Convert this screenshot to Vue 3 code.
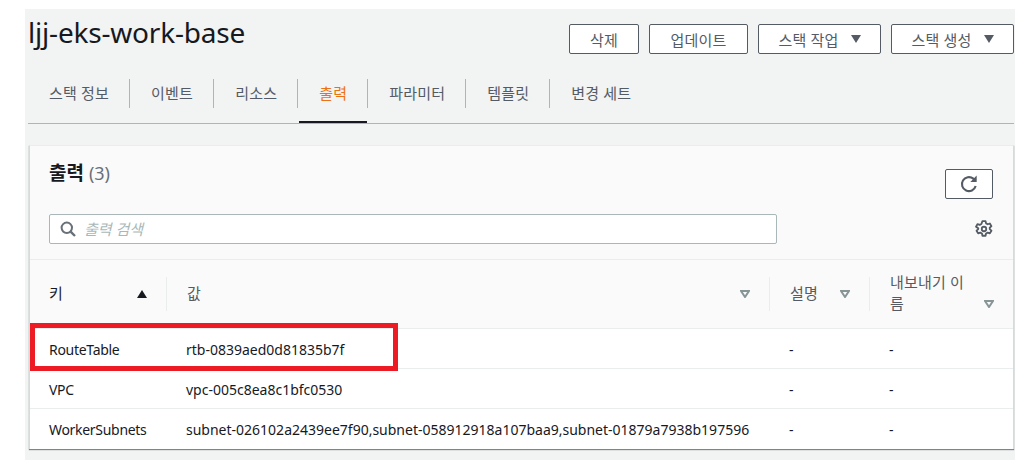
<script setup>
const tabs = ['스택 정보', '이벤트', '리소스', '출력', '파라미터', '템플릿', '변경 세트']

const outputs = [
  { key: 'RouteTable', value: 'rtb-0839aed0d81835b7f', desc: '-', exportName: '-' },
  { key: 'VPC', value: 'vpc-005c8ea8c1bfc0530', desc: '-', exportName: '-' },
  {
    key: 'WorkerSubnets',
    value: 'subnet-026102a2439ee7f90,subnet-058912918a107baa9,subnet-01879a7938b197596',
    desc: '-',
    exportName: '-',
  },
]
</script>

<template>
  <div class="page">
    <div class="top">
      <h1>ljj-eks-work-base</h1>
      <div class="actions">
        <button class="btn w-del">삭제</button>
        <button class="btn w-upd">업데이트</button>
        <button class="btn w-menu">스택 작업<span class="caret"></span></button>
        <button class="btn w-menu">스택 생성<span class="caret"></span></button>
      </div>
    </div>

    <!-- Tabs -->
    <div class="tabs">
      <div v-for="tab in tabs" :key="tab" class="tab" :class="{ active: tab === '출력' }">
        <span class="tab-label">{{ tab }}</span>
      </div>
    </div>

    <!-- Outputs card -->
    <div class="card">
      <div class="card-head">
        <div class="head-row">
          <h2>출력 <span class="count">(3)</span></h2>
          <button class="refresh">
            <svg width="20" height="20" viewBox="0 0 18 18" fill="none">
              <path d="M15 10.800A6.300 6.300 0 1 1 12.900 4.200L15 6" stroke="#545b64" stroke-width="1.900" />
              <path d="M15.900 1.300V7.200H10.200Z" fill="#545b64" />
            </svg>
          </button>
        </div>
        <div class="search-row">
          <div class="search">
            <svg width="16" height="16" viewBox="0 0 16 16" fill="none">
              <circle cx="6.800" cy="6.800" r="5.200" stroke="#687078" stroke-width="2" />
              <path d="M10.600 10.600L15 15" stroke="#687078" stroke-width="2.400" />
            </svg>
            <span class="placeholder">출력 검색</span>
          </div>
          <svg class="gear" width="18" height="18" viewBox="0 0 16 16" fill="none">
            <path
              d="M6.600 1h2.800l.4 2 1.500.8 1.900-.7 1.400 2.400-1.500 1.400v1.200l1.500 1.400-1.400 2.400-1.900-.7-1.500.8-.4 2H6.600l-.4-2-1.500-.8-1.900.7-1.400-2.400 1.500-1.400V7.400L.9 6 2.300 3.600l1.900.7 1.500-.8Z"
              stroke="#545b64"
              stroke-width="1.600"
              stroke-linejoin="round"
            />
            <circle cx="8" cy="8" r="2" stroke="#545b64" stroke-width="1.600" />
          </svg>
        </div>
      </div>

      <table>
        <colgroup>
          <col class="c-key" />
          <col class="c-value" />
          <col class="c-desc" />
          <col class="c-export" />
        </colgroup>
        <thead>
          <tr>
            <th>
              <div class="th-in strong">
                <span class="th-text">키</span>
                <svg width="10" height="8" viewBox="0 0 10 8"><path d="M5 0l5 8H0Z" fill="#16191f" /></svg>
              </div>
            </th>
            <th>
              <div class="th-in sep">
                <span class="th-text">값</span>
                <svg width="10" height="8" viewBox="0 0 10 8"><path d="M1 1h8L5 7Z" fill="none" stroke="#879596" stroke-width="2" /></svg>
              </div>
            </th>
            <th>
              <div class="th-in sep">
                <span class="th-text">설명</span>
                <svg width="10" height="8" viewBox="0 0 10 8"><path d="M1 1h8L5 7Z" fill="none" stroke="#879596" stroke-width="2" /></svg>
              </div>
            </th>
            <th>
              <div class="th-in sep wrap">
                <span class="th-long">내보내기 이름</span>
                <svg class="sort-low" width="10" height="8" viewBox="0 0 10 8"><path d="M1 1h8L5 7Z" fill="none" stroke="#879596" stroke-width="2" /></svg>
              </div>
            </th>
          </tr>
        </thead>
        <tbody>
          <tr v-for="row in outputs" :key="row.key">
            <td class="key">{{ row.key }}</td>
            <td class="val">{{ row.value }}</td>
            <td class="val">{{ row.desc }}</td>
            <td class="val">{{ row.exportName }}</td>
          </tr>
        </tbody>
      </table>
    </div>

    <!-- Red annotation over the first row -->
    <div class="marker"></div>
  </div>
</template>

<style scoped>
.page {
  position: relative;
  box-sizing: border-box;
  width: 990px;
  height: 451px;
  margin: 9px 0 0 25px;
  padding: 0 1px 0 3px;
  background: #f2f3f3;
  font-family: "Noto Sans", "Noto Sans CJK KR", sans-serif;
  font-size: 14px;
  color: #16191f;
}

/* Header */
.top {
  display: flex;
  justify-content: space-between;
  height: 70px;
}

h1 {
  margin: 3px 0 0;
  font-size: 28px;
  line-height: 40px;
  font-weight: 400;
  letter-spacing: -0.2px;
}

.actions {
  display: flex;
  gap: 10px;
  padding-top: 15px;
}

.btn {
  display: flex;
  align-items: center;
  justify-content: center;
  gap: 12px;
  box-sizing: border-box;
  height: 30px;
  padding: 0;
  border: 1px solid #545b64;
  border-radius: 2px;
  background: #fff;
  color: #545b64;
  font: 400 15px "Noto Sans", "Noto Sans CJK KR", sans-serif;
  letter-spacing: 0.2px;
}

.w-del {
  width: 70px;
}

.w-upd {
  width: 99px;
}

.w-menu {
  width: 123px;
}

.caret {
  border-left: 5px solid transparent;
  border-right: 5px solid transparent;
  border-top: 8px solid #545b64;
}

/* Tabs */
.tabs {
  display: flex;
  box-sizing: border-box;
  height: 45px;
  border-bottom: 1px solid #aab7b8;
}

.tab {
  color: #545b64;
  font-size: 15px;
  letter-spacing: 0.2px;
}

.tab-label {
  display: block;
  height: 29px;
  padding: 0 20px 0 21px;
  line-height: 29px;
  border-right: 1px solid #aab7b8;
}

.tab:last-child .tab-label {
  border-right: none;
}

.tab.active {
  color: #ec7211;
}

.tab.active::after {
  content: '';
  display: block;
  height: 2px;
  margin: 13px 1px 0;
  background: #16191f;
}

/* Card */
.card {
  box-sizing: border-box;
  width: 985px;
  margin: 21px 0 0 1px;
  background: #fff;
  border-top: 1px solid #eaeded;
  border-left: 1px solid #d5dbdb;
  border-right: 1px solid #d5dbdb;
  box-shadow: 0 1px 1px rgba(0, 28, 36, 0.5);
}

.card-head {
  box-sizing: border-box;
  height: 114px;
  padding: 0 20px 0 19px;
  background: #fafafa;
  border-bottom: 1px solid #eaeded;
}

.head-row {
  display: flex;
  justify-content: space-between;
  box-sizing: border-box;
  height: 68px;
  padding-top: 23px;
}

h2 {
  margin: -14px 0 0;
  font-size: 19px;
  line-height: 36px;
  font-weight: 700;
}

.count {
  color: #687078;
  font-size: 18px;
  font-weight: 400;
}

.refresh {
  display: flex;
  align-items: center;
  justify-content: center;
  box-sizing: border-box;
  width: 48px;
  height: 30px;
  padding: 0;
  border: 1px solid #545b64;
  border-radius: 2px;
  background: #fff;
}

.search-row {
  display: flex;
  align-items: center;
  justify-content: space-between;
}

.search {
  display: flex;
  align-items: center;
  gap: 8px;
  box-sizing: border-box;
  width: 728px;
  height: 30px;
  padding-left: 10px;
  border: 1px solid #aab7b8;
  border-radius: 2px;
  background: #fff;
}

.placeholder {
  margin-bottom: 2px;
  color: #aab7b8;
  font-style: italic;
  font-size: 15px;
}

/* Table */
table {
  width: 100%;
  table-layout: fixed;
  border-collapse: collapse;
}

.c-key {
  width: 136px;
}

.c-value {
  width: 603px;
}

.c-desc {
  width: 100px;
}

th {
  height: 68px;
  padding: 0;
  background: #fafafa;
  border-bottom: 1px solid #eaeded;
  text-align: left;
  font-size: 15px;
  font-weight: 400;
  letter-spacing: 0.2px;
  color: #545b64;
}

.th-in {
  display: flex;
  align-items: center;
  justify-content: space-between;
  box-sizing: border-box;
  height: 34px;
  padding: 0 19px 0 20px;
}

.th-in.strong {
  padding-left: 19px;
  color: #16191f;
}

.th-text {
  margin-bottom: 3px;
}

.th-in.sep {
  border-left: 1px solid #eaeded;
}

.th-in.wrap {
  position: relative;
}

.th-long {
  position: absolute;
  left: 20px;
  top: -5px;
  width: 76px;
  line-height: 21px;
}

.sort-low {
  position: absolute;
  right: 19px;
  top: 23px;
}

td {
  box-sizing: border-box;
  height: 40px;
  padding: 2px 0 0 19px;
  border-bottom: 1px solid #eaeded;
  white-space: nowrap;
  overflow: visible;
}

tr:last-child td {
  border-bottom: none;
}

td.key {
  letter-spacing: -0.3px;
}

td.val {
  padding-left: 20px;
}

/* Annotation */
.marker {
  position: absolute;
  left: 5px;
  top: 314px;
  width: 368px;
  height: 48px;
  box-sizing: border-box;
  border: 5px solid #ed1c24;
}
</style>

<style>
html,
body {
  background: #fff;
}
</style>
